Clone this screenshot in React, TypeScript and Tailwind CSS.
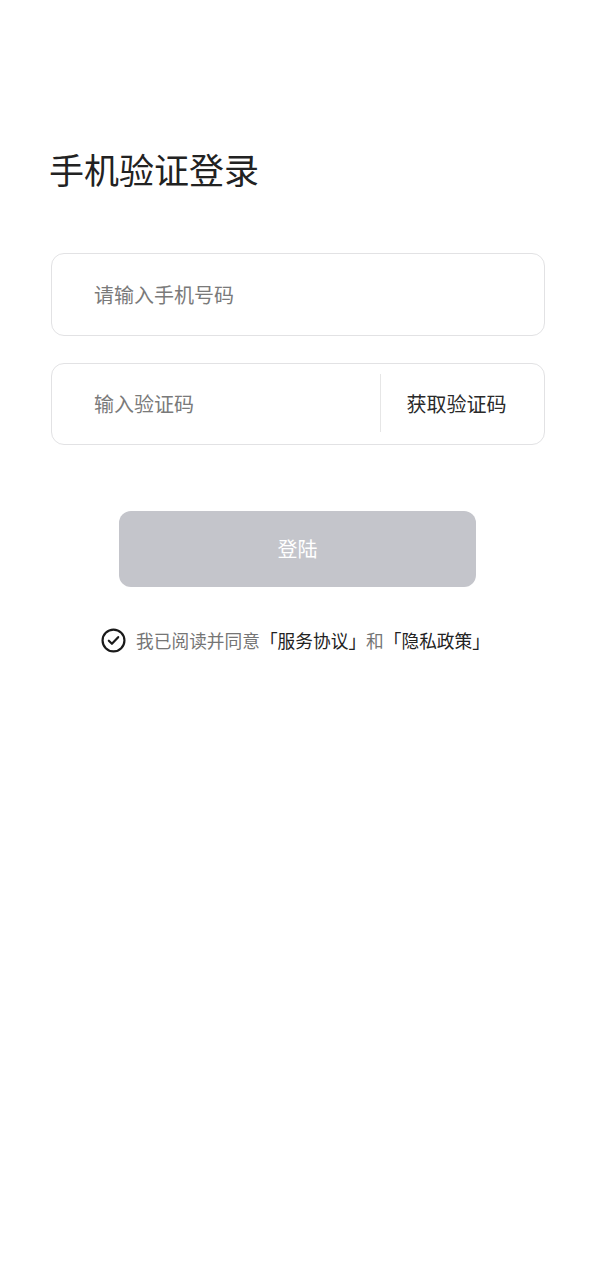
import React from 'react';

const font = { fontFamily: '"Noto Sans CJK SC", "Noto Sans", sans-serif' };

const CheckCircle: React.FC = () => (
  <svg width="25" height="25" viewBox="0 0 24 24" fill="none" stroke="#1a1a1a" strokeWidth="2.1" strokeLinecap="round" strokeLinejoin="round">
    <circle cx="12" cy="12" r="10.5" />
    <path d="M7.5 12.2l3 3 6-6.4" />
  </svg>
);

// full-width corner brackets, one em each
const Open = () => <span className="inline-block w-[1em] text-right">「</span>;
const Close = () => <span className="inline-block w-[1em] text-left">」</span>;

export default function App() {
  return (
    <div className="min-h-[1280px] w-full bg-white" style={font}>
      <div className="pt-[144px] pl-[49px]">
        <h1 className="text-[35px] leading-[50px] font-normal text-[#222]">手机验证登录</h1>
      </div>

      <div className="mt-[59px] ml-[51px] mr-[49px] flex flex-col gap-[27px]">
        {/* phone */}
        <div className="h-[83px] rounded-[13px] border border-[#e2e2e4] flex items-center pl-[42px]">
          <input
            className="w-full bg-transparent text-[20px] text-[#333] outline-none placeholder:text-[#7a7a7a]"
            placeholder="请输入手机号码"
          />
        </div>

        {/* code */}
        <div className="h-[82px] rounded-[13px] border border-[#e2e2e4] flex items-center pl-[42px]">
          <input
            className="flex-1 min-w-0 bg-transparent text-[20px] text-[#333] outline-none placeholder:text-[#7a7a7a]"
            placeholder="输入验证码"
          />
          <div className="w-px h-[58px] bg-[#e6e6e6] -mt-[2px]" />
          <button className="w-[163px] shrink-0 pr-[12px] text-[20px] text-[#2a2a2a] text-center">获取验证码</button>
        </div>
      </div>

      <div className="mt-[66px] flex justify-center">
        <button className="w-[357px] h-[76px] rounded-[12px] bg-[#c4c5cb] text-white text-[20px] ml-px">登陆</button>
      </div>

      <div className="mt-[41px] flex items-center justify-center gap-[10px] pr-[3px]">
        <CheckCircle />
        <p className="text-[17.7px] text-[#757575] leading-none whitespace-nowrap">
          我已阅读并同意
          <span className="text-[#222]"><Open />服务协议<Close /></span>
          和
          <span className="text-[#222]"><Open />隐私政策<Close /></span>
        </p>
      </div>
    </div>
  );
}
